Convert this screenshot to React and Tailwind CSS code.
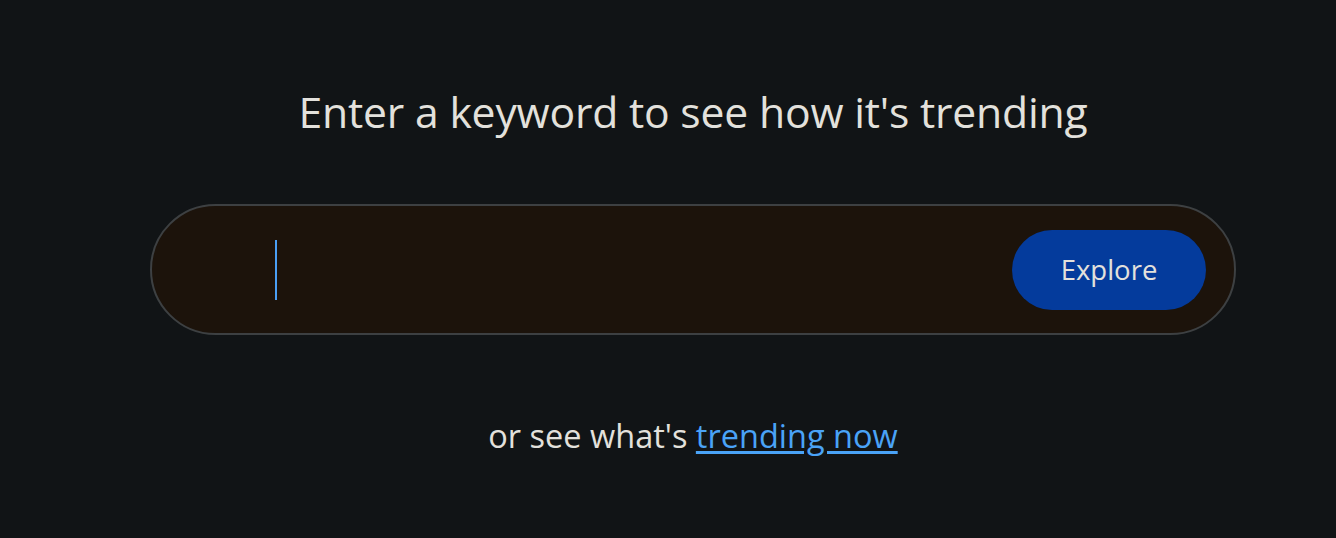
import React, { useState } from "react";

const App = () => {
  const [query, setQuery] = useState("");

  return (
    <div
      className="min-h-screen w-full bg-[#111416] pl-[50px]"
      style={{ fontFamily: '"Open Sans", "Noto Sans", sans-serif' }}
    >
      <div className="flex flex-col items-center pt-[82px]">
        {/* Heading */}
        <h1 className="text-[42.7px] leading-[60px] font-normal text-[#e3e1dc] tracking-[-0.2px]">
          Enter a keyword to see how it's trending
        </h1>

        {/* Search box */}
        <div className="mt-[62px] flex items-center w-[1086px] h-[131px] rounded-full border-2 border-[#3d4042] bg-[#1c130b] pl-[123px] pr-[28px]">
          <div className="flex-1 flex items-center h-full">
            <span className="block w-[2px] h-[60px] bg-[#4a9ff5]" />
            <input
              value={query}
              onChange={(e) => setQuery(e.target.value)}
              className="flex-1 bg-transparent outline-none text-[#e3e1dc] text-[28px]"
            />
          </div>
          <button className="w-[194px] h-[80px] rounded-full bg-[#043b9c] text-[#e3e1dc] text-[27.5px] font-medium">
            Explore
          </button>
        </div>

        {/* Trending now */}
        <p className="mt-[77px] text-[32.5px] text-[#e3e1dc]">
          or see what's{" "}
          <a href="#" className="text-[#4aa3f7] underline underline-offset-[3px] decoration-[2.5px]">
            trending now
          </a>
        </p>
      </div>
    </div>
  );
};

export default App;
